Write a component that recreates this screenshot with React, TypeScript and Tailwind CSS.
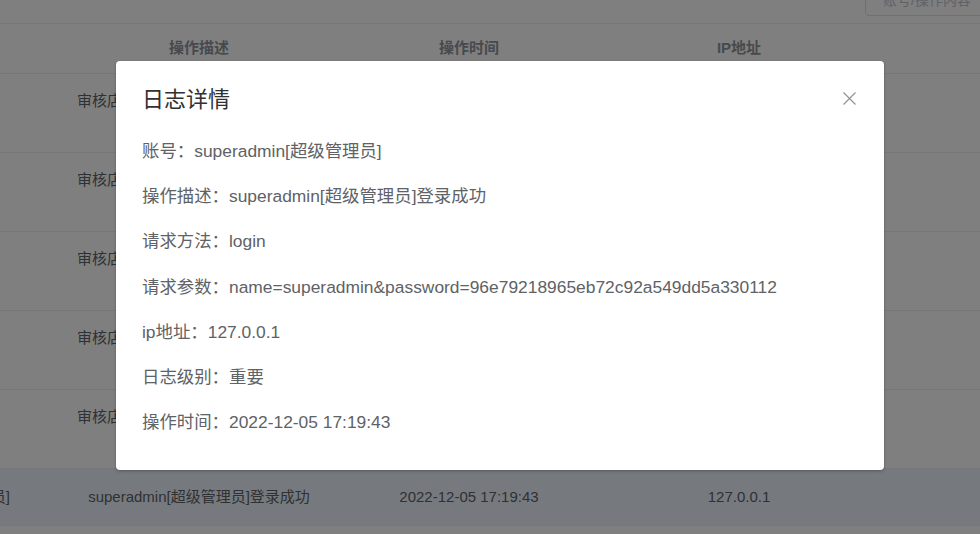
const rows = [
  { account: 'admin[运营]', desc: '审核店铺申请：店铺名称[测试店铺一号]，审核结果：通过', time: '2022-12-05 17:30:12', ip: '127.0.0.1' },
  { account: 'admin[运营]', desc: '审核店铺申请：店铺名称[测试店铺二号]，审核结果：通过', time: '2022-12-05 17:28:40', ip: '127.0.0.1' },
  { account: 'admin[运营]', desc: '审核店铺申请：店铺名称[测试店铺三号]，审核结果：驳回', time: '2022-12-05 17:26:05', ip: '127.0.0.1' },
  { account: 'admin[运营]', desc: '审核店铺申请：店铺名称[测试店铺四号]，审核结果：通过', time: '2022-12-05 17:24:51', ip: '127.0.0.1' },
  { account: 'admin[运营]', desc: '审核店铺申请：店铺名称[测试店铺五号]，审核结果：通过', time: '2022-12-05 17:21:33', ip: '127.0.0.1' },
]

const details = [
  ['账号', 'superadmin[超级管理员]'],
  ['操作描述', 'superadmin[超级管理员]登录成功'],
  ['请求方法', 'login'],
  ['请求参数', 'name=superadmin&password=96e79218965eb72c92a549dd5a330112'],
  ['ip地址', '127.0.0.1'],
  ['日志级别', '重要'],
  ['操作时间', '2022-12-05 17:19:43'],
]

const cols = 'grid grid-cols-[270px_270px_270px_270px_270px]'

export default function App() {
  return (
    <div className="relative h-[534px] w-[980px] overflow-hidden bg-white font-['Liberation_Sans','Noto_Sans_CJK_SC',sans-serif]">
      {/* toolbar, scrolled so only the bottom of the search box shows */}
      <div className="flex h-[24px] justify-end border-b border-[#ebeef5]">
        <div className="-mt-4 mr-[-200px] flex h-8 w-[315px] items-center rounded border border-[#dcdfe6] px-[17px] text-sm text-[#c0c4cc]">
          账号/操作内容
        </div>
      </div>

      <div className="ml-[-206px] w-[1350px] text-[15px] text-[#606266]">
        <div className={`${cols} h-[50px] items-center border-b border-[#ebeef5] text-center font-bold text-[#909399]`}>
          <div>账号</div>
          <div>操作描述</div>
          <div>操作时间</div>
          <div>IP地址</div>
          <div></div>
        </div>
        {rows.map((r, i) => (
          <div key={i} className={`${cols} border-b border-[#ebeef5] text-center leading-[25px]`}>
            <div className="px-4 py-[14px]">{r.account}</div>
            <div className="px-[10px] py-[14px]">{r.desc}</div>
            <div className="px-4 py-[14px]">{r.time}</div>
            <div className="px-4 py-[14px]">{r.ip}</div>
            <div></div>
          </div>
        ))}
        <div className={`${cols} bg-[#ecf5ff] text-center leading-6`}>
          <div className="whitespace-nowrap px-4 py-4">superadmin[超级管理员]</div>
          <div className="px-4 py-4">superadmin[超级管理员]登录成功</div>
          <div className="px-4 py-4">2022-12-05 17:19:43</div>
          <div className="px-4 py-4">127.0.0.1</div>
          <div></div>
        </div>
        <div className={`${cols} border-t border-[#ebeef5] text-center leading-6`}>
          <div className="px-4 py-4">superadmin[超级管理员]</div>
          <div className="px-4 py-4">superadmin[超级管理员]退出登录</div>
          <div className="px-4 py-4">2022-12-05 17:10:02</div>
          <div className="px-4 py-4">127.0.0.1</div>
          <div></div>
        </div>
      </div>

      {/* dialog overlay */}
      <div className="absolute inset-0 bg-black/50">
        <div className="ml-[116px] mt-[61px] w-[768px] rounded-sm bg-white pb-[25px] pl-[26px] pr-[28px] pt-[24px] shadow-[0_1px_3px_rgba(0,0,0,0.3)]">
          <div className="flex items-center justify-between">
            <h2 className="text-[22px] leading-[30px] text-[#303133]">日志详情</h2>
            <svg width="13" height="13" viewBox="0 0 13 13" className="-mt-1 text-[#909399]">
              <path d="M0.5 0.5L12.5 12.5M12.5 0.5L0.5 12.5" stroke="currentColor" strokeWidth="1.2" />
            </svg>
          </div>
          <div className="mt-[14px] text-[17.4px] leading-[45.2px] text-[#606266]">
            {details.map(([k, v]) => (
              <p key={k}>
                {k}：{v}
              </p>
            ))}
          </div>
        </div>
      </div>
    </div>
  )
}
